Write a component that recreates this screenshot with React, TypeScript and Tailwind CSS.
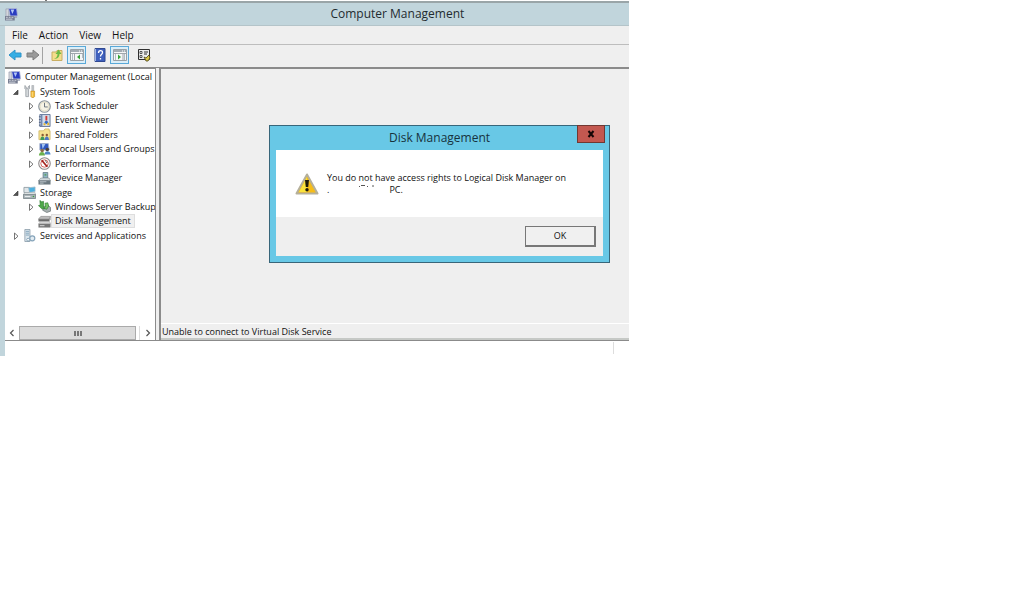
import type { ReactNode } from "react";

type TreeItem = {
  label: string;
  icon: ReactNode;
  level: 0 | 1 | 2;
  state?: "open" | "closed";
  selected?: boolean;
};

const ComputerIcon = () => (
  <svg viewBox="0 0 14 14" className="size-[13px] shrink-0" aria-hidden="true">
    <path d="M1 1h3v8H1z" fill="#d3d5dc" stroke="#8f92a3" strokeWidth=".6" />
    <path d="M4 .5h8.500l1 8H5.500z" fill="#2a3cc0" stroke="#b4bbd6" strokeWidth=".9" />
    <path d="M6 1.500h4l-2 5z" fill="#b3c6f6" />
    <path d="M9 9h4v1.500H9z" fill="#9aa0b4" />
    <path d="M0 8.500h9l1.500 1.500v3.500H0z" fill="#767c90" />
    <path d="M1 10h2M4 10h2M7 10h2M1 12h7" stroke="#dfe2ea" strokeWidth=".9" />
  </svg>
);

const ToolsIcon = () => (
  <svg viewBox="0 0 14 14" className="size-[13px] shrink-0" aria-hidden="true">
    <path d="M2 .5v3.500l1 1v7.500h3V5l1-1V.5L5.500 2v2h-2V2z" fill="#d5d9dc" stroke="#858b91" strokeWidth=".7" />
    <path d="M9.500.5h2V7h-2z" fill="#c3c7ca" stroke="#90959a" strokeWidth=".5" />
    <path d="M8.500 6.500h4v6l-1 1h-2l-1-1z" fill="#f5bd3a" stroke="#b98217" strokeWidth=".6" />
    <path d="M10 7.500v5" stroke="#fde6a0" strokeWidth=".8" />
  </svg>
);

const ClockIcon = () => (
  <svg viewBox="0 0 14 14" className="size-[13px] shrink-0" aria-hidden="true">
    <circle cx="7" cy="7" r="6.200" fill="#f6f3e6" stroke="#8d969e" strokeWidth="1.300" />
    <circle cx="7" cy="7" r="4.700" fill="none" stroke="#d9d4b8" strokeWidth=".7" />
    <path d="M7 3v4.500h3.500" fill="none" stroke="#66707a" />
  </svg>
);

const EventIcon = () => (
  <svg viewBox="0 0 14 14" className="size-[13px] shrink-0" aria-hidden="true">
    <path d="M2 .5h11v13H2z" fill="#cfdbea" stroke="#5f7396" />
    <path d="M4 1v12" stroke="#6f87b0" strokeWidth="1.500" />
    <path d="M1 3h2M1 6h2M1 9h2M1 12h2" stroke="#3b4c6b" strokeWidth=".8" />
    <path d="M8 2h2v5H8z" fill="#d23a34" />
    <circle cx="9" cy="9" r="1.800" fill="#2f69c8" />
    <path d="M6 10h2v2H6zM10 9.500h2v2.500h-2z" fill="#e6b52d" />
  </svg>
);

const SharedIcon = () => (
  <svg viewBox="0 0 14 14" className="size-[13px] shrink-0" aria-hidden="true">
    <path d="M1 12.500V3h5l1.500-2H12v2h1v9.500z" fill="#f5e293" stroke="#cbb057" strokeWidth=".8" />
    <circle cx="5" cy="7.500" r="1.300" fill="#8b5b35" />
    <circle cx="9.500" cy="7.500" r="1.300" fill="#8b5b35" />
    <path d="M2.500 13c0-5 4.500-5 4.500 0z" fill="#3f9a58" />
    <path d="M7.200 13c0-5 4.600-5 4.600 0z" fill="#4d78c2" />
  </svg>
);

const UsersIcon = () => (
  <svg viewBox="0 0 14 14" className="size-[13px] shrink-0" aria-hidden="true">
    <path d="M2 .5h9l1 7H2z" fill="#2f58c0" stroke="#a1aec9" />
    <path d="M4 1h4L5 6.500z" fill="#a3c4f2" />
    <circle cx="4.500" cy="8" r="1.900" fill="#8b6847" />
    <circle cx="10" cy="7" r="1.900" fill="#4d4138" />
    <path d="M1 13.500c0-5 6.500-5 6.500 0z" fill="#6ab04c" />
    <path d="M7 12.500c0-5 6.500-5 6.500 0z" fill="#4f86c6" />
  </svg>
);

const PerformanceIcon = () => (
  <svg viewBox="0 0 14 14" className="size-[13px] shrink-0" aria-hidden="true">
    <circle cx="7" cy="7" r="6.200" fill="#fff" stroke="#8f8a8a" strokeWidth="1.200" />
    <circle cx="7" cy="7" r="4" fill="none" stroke="#d0605a" strokeWidth="1" />
    <path d="M4 3.500l6 7" stroke="#a3201c" strokeWidth="1.800" />
    <path d="M8 3.500l1.500 3" stroke="#444" strokeWidth=".8" />
  </svg>
);

const DeviceIcon = () => (
  <svg viewBox="0 0 14 14" className="size-[13px] shrink-0" aria-hidden="true">
    <path d="M5.500.5h5v6h-5z" fill="#8fb6c6" stroke="#60747e" strokeWidth=".8" />
    <path d="M7 2h2v2H7z" fill="#63a06b" />
    <path d="M3 6.500h9l1.500 3H.5z" fill="#d3dadd" stroke="#7d888e" strokeWidth=".6" />
    <path d="M.5 9h13v4.500H.5z" fill="#6b787f" />
    <path d="M2 10.500h7M2 12h4" stroke="#cfd7da" strokeWidth=".8" />
  </svg>
);

const StorageIcon = () => (
  <svg viewBox="0 0 14 14" className="size-[13px] shrink-0" aria-hidden="true">
    <path d="M1 1.500h6V7H1z" fill="#dfe5e8" stroke="#7f8f97" strokeWidth=".8" />
    <path d="M6 2l7-1v5l-6 1z" fill="#4db0e0" stroke="#9fb9c6" strokeWidth=".8" />
    <path d="M2 7h11l.5 2.500H.5z" fill="#eceff0" stroke="#8b969b" strokeWidth=".5" />
    <path d="M.5 9h13v4.500H.5z" fill="#a9b3b7" stroke="#6d797f" strokeWidth=".8" />
    <path d="M2 11.300h6" stroke="#eef1f2" />
    <path d="M10.500 11.300H12" stroke="#39a03c" strokeWidth="1.300" />
  </svg>
);

const BackupIcon = () => (
  <svg viewBox="0 0 14 14" className="size-[13px] shrink-0" aria-hidden="true">
    <path d="M6 7l5-1 2.500 2v4l-4 1.500L5 11z" fill="#a7b0b0" stroke="#606b6b" strokeWidth=".7" />
    <path d="M2 .5l2 1.500 2-.5v5l1 3H4L.5 6l2-.5z" fill="#4ea849" stroke="#2c7b2f" strokeWidth=".7" />
    <path d="M7.500 3.500l3-.5 1 3.500-2 3.500-3-1 1.500-2z" fill="#72c164" stroke="#2c7b2f" strokeWidth=".7" />
  </svg>
);

const DiskIcon = () => (
  <svg viewBox="0 0 14 14" className="size-[13px] shrink-0" aria-hidden="true">
    <path d="M3 1.500h10.500L12 4.500H.5z" fill="#bdbdbd" stroke="#838383" strokeWidth=".7" />
    <path d="M.5 4.500H12V7H.5z" fill="#6b6b6b" />
    <path d="M12 4.500l1.500-3V5L12 7z" fill="#949494" />
    <path d="M3 7h9.500l1 2.500H.5z" fill="#d6d6d6" stroke="#9a9a9a" strokeWidth=".5" />
    <path d="M.5 9.500h13v4H.5z" fill="#777" />
    <path d="M2 11.500h5" stroke="#ddd" />
  </svg>
);

const ServicesIcon = () => (
  <svg viewBox="0 0 14 14" className="size-[13px] shrink-0" aria-hidden="true">
    <path d="M2 .5h5.500v13H2z" fill="#dce7ee" stroke="#8093a0" strokeWidth=".8" />
    <path d="M3 2.500h3.500M3 4.500h3.500M3 6.500h3.500" stroke="#7da0b8" />
    <circle cx="10" cy="10" r="2.700" fill="#e3ecf2" stroke="#86a4ba" strokeWidth="1.300" />
    <circle cx="5.500" cy="11.500" r="1.500" fill="#fff" stroke="#7292aa" strokeWidth=".8" />
  </svg>
);

const treeItems: TreeItem[] = [
  { label: "Computer Management (Local", icon: <ComputerIcon />, level: 0 },
  { label: "System Tools", icon: <ToolsIcon />, level: 1, state: "open" },
  { label: "Task Scheduler", icon: <ClockIcon />, level: 2, state: "closed" },
  { label: "Event Viewer", icon: <EventIcon />, level: 2, state: "closed" },
  { label: "Shared Folders", icon: <SharedIcon />, level: 2, state: "closed" },
  { label: "Local Users and Groups", icon: <UsersIcon />, level: 2, state: "closed" },
  { label: "Performance", icon: <PerformanceIcon />, level: 2, state: "closed" },
  { label: "Device Manager", icon: <DeviceIcon />, level: 2 },
  { label: "Storage", icon: <StorageIcon />, level: 1, state: "open" },
  { label: "Windows Server Backup", icon: <BackupIcon />, level: 2, state: "closed" },
  { label: "Disk Management", icon: <DiskIcon />, level: 2, selected: true },
  { label: "Services and Applications", icon: <ServicesIcon />, level: 1, state: "closed" },
];

const indents = ["pl-0", "pl-1", "pl-[19px]"];

const Expander = ({ state }: { state?: "open" | "closed" }) => (
  <svg viewBox="0 0 8 8" className="mr-[3px] size-2 shrink-0" aria-hidden="true">
    {state === "open" && <path d="M6 2v4.500H1.500z" fill="#555" stroke="#333" strokeWidth=".6" />}
    {state === "closed" && <path d="M2.500 1v6.400L6 4.200z" fill="#fff" stroke="#666" strokeWidth=".9" />}
  </svg>
);

const TreeRow = ({ item }: { item: TreeItem }) => (
  <li className={`flex items-center whitespace-nowrap ${indents[item.level]}`}>
    {item.level > 0 && <Expander state={item.state} />}
    {item.icon}
    <span
      className={
        item.selected ? "ml-px bg-[#f0f0f0] px-[3px] outline outline-[#dedede]" : "pl-1"
      }
    >
      {item.label}
    </span>
  </li>
);

const Arrow = ({ flip, fill, stroke }: { flip?: boolean; fill: string; stroke: string }) => (
  <svg viewBox="0 0 14 12" className={`h-3 w-3.5 ${flip ? "rotate-180" : ""}`} aria-hidden="true">
    <path d="M1 6l6-5v3h6v4H7v3z" fill={fill} stroke={stroke} strokeLinejoin="round" />
  </svg>
);

const PaneIcon = ({ flip }: { flip?: boolean }) => (
  <svg viewBox="0 0 14 12" className="h-3 w-3.5" aria-hidden="true">
    <path d="M.5.5h13v11H.5z" fill="#f5f6f7" stroke="#9aa1a6" />
    <path d="M1 2h12" stroke="#a3acb3" strokeWidth="2" />
    <path d="M9 2h1M11 2h1" stroke="#fff" />
    <path d={flip ? "M1 4.500h12M10 5v6" : "M1 4.500h12M4.500 5v6"} stroke="#a0a7ad" />
    <path
      d={flip ? "M11 6h1M11 8h1M11 10h1M2 6h1M2 8h1M2 10h1" : "M2 6h1M2 8h1M2 10h1M12 6h1M12 8h1"}
      stroke="#6f8696"
    />
    <path d={flip ? "M5 5.500v5l3-2.500z" : "M10 5.500v5L7 8z"} fill="#35a535" />
  </svg>
);

const Toolbar = () => (
  <div className="flex h-[23px] items-center border-b border-[#8b8b8b] px-px pb-0.5">
    <button type="button" aria-label="Back" className="flex w-[18px] justify-center">
      <Arrow fill="#35aee5" stroke="#2f93c8" />
    </button>
    <button type="button" aria-label="Forward" className="flex w-[18px] justify-center">
      <Arrow flip fill="#9a9a9a" stroke="#7d7d7d" />
    </button>
    <span className="mr-2 h-[17px] border-r border-[#a3a3a3]" />
    <button type="button" aria-label="Up one level" className="mr-1 flex">
      <svg viewBox="0 0 12 14" className="h-3.5 w-3" aria-hidden="true">
        <path d="M1 12.500V4h4l1-1.500h5v10z" fill="#f3dd8b" stroke="#c9ae62" />
        <path d="M3 10.500c2 0 3.500-2 3.500-4.500H4.500l3-4.500 3 4.500h-2c0 3-2 5.500-5.500 4.500z" fill="#6cba45" />
      </svg>
    </button>
    <button type="button" aria-label="Show console tree" className="mr-2 flex h-[18px] w-[19px] items-center justify-center border border-[#5aa9d8] bg-[#dbeef8]">
      <PaneIcon />
    </button>
    <button type="button" aria-label="Help topics" className="mr-1 flex">
      <svg viewBox="0 0 12 14" className="h-3.5 w-3" aria-hidden="true">
        <path d="M1 .5h10v13H1z" fill="#3f60bd" stroke="#2f4891" />
        <path d="M1.500 1v12" stroke="#a3b6e5" />
        <path d="M4.500 5c0-3 4-3 4-.5 0 2-2 1.500-2 4M6.500 10v1.500" fill="none" stroke="#fff" strokeWidth="1.300" />
      </svg>
    </button>
    <button type="button" aria-label="Show action pane" className="mr-2 flex h-[18px] w-[19px] items-center justify-center border border-[#5aa9d8] bg-[#dbeef8]">
      <PaneIcon flip />
    </button>
    <button type="button" aria-label="Settings" className="flex">
      <svg viewBox="0 0 14 14" className="size-3.5" aria-hidden="true">
        <path d="M1.500 1.500h11v10h-11z" fill="#ececec" stroke="#303030" />
        <path d="M3 3.500h2v2H3zM3 7.500h2v2H3z" fill="#fff" stroke="#333" strokeWidth=".8" />
        <path d="M7 4h4M7 6h3" stroke="#333" />
        <path d="M9 13l-2-4 2 1 3-3 1 3-2 3z" fill="#d7c343" stroke="#4a4315" strokeWidth=".8" />
      </svg>
    </button>
  </div>
);

const ConsoleTree = () => (
  <nav aria-label="Console tree" className="flex w-[151px] shrink-0 flex-col overflow-hidden border-t border-r border-[#8b8b8b] bg-white">
    <ul className="mt-px grid h-[173px] auto-rows-fr pl-[3px]">
      {treeItems.map((item) => (
        <TreeRow key={item.label} item={item} />
      ))}
    </ul>
    <div className="mt-auto flex h-[14px] bg-white">
      <button type="button" aria-label="Scroll left" className="flex w-[14px] items-center justify-center">
        <svg viewBox="0 0 6 8" className="h-2 w-1.5" aria-hidden="true">
          <path d="M4.500 1L1.500 4l3 3" fill="none" stroke="#555" strokeWidth="1.200" />
        </svg>
      </button>
      <div className="flex w-[117px] items-center justify-center gap-px border border-[#aaa] bg-[#dcdcdc]">
        <span className="h-[5px] w-0.5 bg-[#777]" />
        <span className="h-[5px] w-0.5 bg-[#777]" />
        <span className="h-[5px] w-0.5 bg-[#777]" />
      </div>
      <button type="button" aria-label="Scroll right" className="ml-auto flex w-[16px] items-center justify-center border-l border-[#ddd]">
        <svg viewBox="0 0 6 8" className="h-2 w-1.5" aria-hidden="true">
          <path d="M1.500 1l3 3-3 3" fill="none" stroke="#555" strokeWidth="1.200" />
        </svg>
      </button>
    </div>
  </nav>
);

const AccessDialog = () => (
  <div
    role="alertdialog"
    aria-labelledby="dialog-title"
    aria-describedby="dialog-message"
    className="absolute top-[56px] left-[108px] w-[341px] border border-[#38667a] bg-[#68c8e6] px-1.5 pb-1.5"
  >
    <div className="relative flex h-6 items-center justify-center">
      <h2 id="dialog-title" className="text-[12px] text-[#17323d]">
        Disk Management
      </h2>
      <button
        type="button"
        aria-label="Close"
        className="absolute -top-px -right-0.5 flex h-[18px] w-7 items-center justify-center border border-[#713832] bg-[#c35850]"
      >
        <svg viewBox="0 0 8 8" className="size-2" aria-hidden="true">
          <path d="M1.500 1l5 6M6.500 1l-5 6" stroke="#160606" strokeWidth="2" />
        </svg>
      </button>
    </div>
    <div className="flex h-[67px] gap-2 bg-white pl-[19px]">
      <svg viewBox="0 0 24 22" className="mt-[23px] h-[22px] w-6 shrink-0" aria-hidden="true">
        <path d="M12 1.500L22.500 20.500h-21z" fill="#f6bd18" stroke="#b5b09b" strokeWidth="2" strokeLinejoin="round" />
        <path d="M12 4L4 19h8z" fill="#fbe33c" />
        <path d="M10 7h4l-.8 7h-2.400z" fill="#1e1a0a" />
        <circle cx="12" cy="16.800" r="1.700" fill="#1e1a0a" />
      </svg>
      <p id="dialog-message" className="pt-[22px] leading-3">
        You do not have access rights to Logical Disk Manager on
        <br />
        <span className="flex">
          <span>.</span>
          <svg viewBox="0 0 60 12" className="h-3 w-[60px]" aria-hidden="true">
            <path d="M30 2.500h1M32 1.500h4M38 2.500h1M43 2h2" stroke="#555" strokeWidth="1" />
          </svg>
          <span>PC.</span>
        </span>
      </p>
    </div>
    <div className="flex h-[39px] items-center justify-end bg-[#efefef] pr-[7px]">
      <button
        type="button"
        className="h-[21px] w-[71px] border border-r-2 border-b-2 border-[#777] bg-[#f0f0f0]"
      >
        OK
      </button>
    </div>
  </div>
);

const App = () => (
  <div className="min-h-screen bg-white font-['Open_Sans','Noto_Sans',sans-serif] text-[9px] leading-3 text-[#111]">
    <div className="w-[61.4%]">
      <div className="flex h-px bg-white pl-[45px]">
        <span className="w-0.5 bg-[#777]" />
      </div>
      <header className="flex h-[25px] items-center border-t-2 border-b border-t-[#9aa5a8] border-b-[#b4c4c9] bg-[#c1d5dc] pl-[5px]">
        <ComputerIcon />
        <h1 className="flex-1 pl-[148px] text-center text-[12px] text-[#1f2b30]">Computer Management</h1>
      </header>
      <div className="border-l-[5px] border-[#c1d5dc]">
        <div className="bg-[#efefef]">
          <div role="menubar" className="flex h-[19px] items-center gap-[11px] border-b border-[#bdbdbd] px-[7px] text-[10px]">
            <button type="button">File</button>
            <button type="button">Action</button>
            <button type="button">View</button>
            <button type="button">Help</button>
          </div>
          <Toolbar />
          <div className="flex h-[273px] gap-[3px] border-b border-[#8b8b8b]">
            <ConsoleTree />
            <main className="relative flex flex-1 flex-col border-t border-l-2 border-[#8b8b8b]">
              <AccessDialog />
              <p className="mt-auto border-t border-b-2 border-t-white border-b-[#c6c9c6] pt-0.5 pl-px">
                Unable to connect to Virtual Disk Service
              </p>
            </main>
          </div>
        </div>
        <div className="flex h-[15px] justify-end bg-white pr-[15px] pt-px">
          <span className="h-3 border-l border-[#ddd]" />
        </div>
      </div>
    </div>
  </div>
);

export default App;
